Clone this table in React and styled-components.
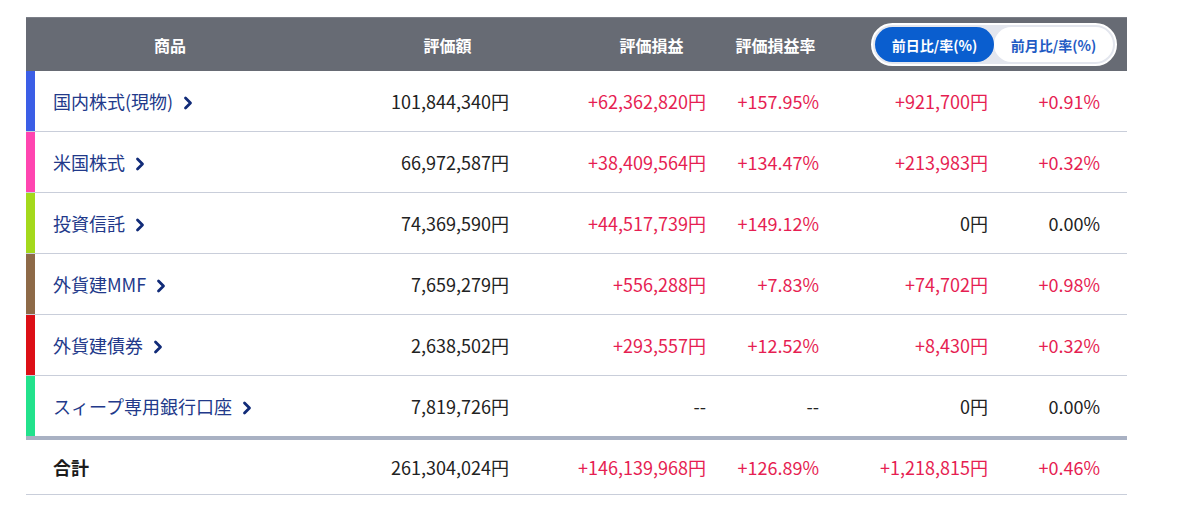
import styled, { createGlobalStyle } from "styled-components";

const GlobalStyle = createGlobalStyle`
    body {
        margin: 0;
        background: #ffffff;
        font-family: "Noto Sans CJK JP", "Noto Sans", sans-serif;
    }
`;

const rows = [
    { name: "国内株式(現物)", color: "#3b5ee6", value: "101,844,340円", pl: "+62,362,820円", rate: "+157.95%", day: "+921,700円", dayRate: "+0.91%" },
    { name: "米国株式", color: "#ff45b0", value: "66,972,587円", pl: "+38,409,564円", rate: "+134.47%", day: "+213,983円", dayRate: "+0.32%" },
    { name: "投資信託", color: "#a4d91c", value: "74,369,590円", pl: "+44,517,739円", rate: "+149.12%", day: "0円", dayRate: "0.00%" },
    { name: "外貨建MMF", color: "#8e6a48", value: "7,659,279円", pl: "+556,288円", rate: "+7.83%", day: "+74,702円", dayRate: "+0.98%" },
    { name: "外貨建債券", color: "#dc0f16", value: "2,638,502円", pl: "+293,557円", rate: "+12.52%", day: "+8,430円", dayRate: "+0.32%" },
    { name: "スィープ専用銀行口座", color: "#22e28c", value: "7,819,726円", pl: "--", rate: "--", day: "0円", dayRate: "0.00%" },
];

const total = { value: "261,304,024円", pl: "+146,139,968円", rate: "+126.89%", day: "+1,218,815円", dayRate: "+0.46%" };

// plus sign means gain -> red
const isUp = (v) => v.startsWith("+");

const Page = styled.div`
    padding: 17px 0 0 26px;
`;

const Table = styled.div`
    width: 1101px;
`;

const cols = "304px 195px 197px 113px 169px 123px";

const HeaderRow = styled.div`
    display: grid;
    grid-template-columns: ${cols};
    height: 54px;
    align-items: center;
    background: #676b74;
    border-top: 1px solid #7b7f88;
    box-sizing: border-box;
`;

const HeaderCell = styled.div`
    color: #ffffff;
    font-size: 16px;
    font-weight: 700;
    text-align: center;
    padding-left: ${(p) => p.$shift > 0 ? p.$shift * 2 : 0}px;
    padding-right: ${(p) => p.$shift < 0 ? -p.$shift * 2 : 0}px;
`;

const ToggleCell = styled.div`
    grid-column: 5 / span 2;
    display: flex;
    justify-content: flex-end;
    padding-right: 10px;
`;

const Toggle = styled.div`
    display: flex;
    width: 246px;
    height: 43px;
    box-sizing: border-box;
    padding: 2px;
    border: 2px solid #ffffff;
    border-radius: 22px;
    background: #e3e6ee;
`;

const ToggleButton = styled.button`
    flex: 1;
    border: none;
    border-radius: 18px;
    font-family: inherit;
    font-size: 14px;
    font-weight: 700;
    background: ${(p) => (p.$active ? "#0a5ecf" : "#ffffff")};
    color: ${(p) => (p.$active ? "#ffffff" : "#1f5bc4")};
    padding: 0;
    cursor: pointer;
`;

const Row = styled.div`
    display: grid;
    grid-template-columns: ${cols};
    height: ${(p) => (p.$total ? 54 : 60)}px;
    align-items: center;
    border-bottom: ${(p) => (p.$thick ? "4px solid #a9b1c3" : "1px solid #c9ceda")};
`;

const NameCell = styled.div`
    align-self: stretch;
    display: flex;
    align-items: center;
    gap: 10px;
    border-left: 9px solid ${(p) => p.$color || "transparent"};
    padding-left: 18px;
    font-size: 18px;
    color: ${(p) => (p.$total ? "#1b1b1b" : "#22398a")};
    font-weight: ${(p) => (p.$total ? 700 : 400)};
`;

const Chevron = styled.svg`
    width: 10px;
    height: 14px;
    margin-top: 3px;
`;

const Cell = styled.div`
    text-align: right;
    padding-right: ${(p) => (p.$last ? 27 : 16)}px;
    font-size: 18px;
    color: ${(p) => (p.$up ? "#e61e52" : "#222222")};
    white-space: nowrap;
`;

const Arrow = () => (
    <Chevron viewBox="0 0 10 14">
        <path d="M2.5 2 L7.5 7 L2.5 12" fill="none" stroke="#112b78" strokeWidth="2.8" strokeLinecap="round" strokeLinejoin="round" />
    </Chevron>
);

const Values = ({ item }) => (
    <>
        <Cell $up={isUp(item.value)}>{item.value}</Cell>
        <Cell $up={isUp(item.pl)}>{item.pl}</Cell>
        <Cell $up={isUp(item.rate)}>{item.rate}</Cell>
        <Cell $up={isUp(item.day)}>{item.day}</Cell>
        <Cell $up={isUp(item.dayRate)} $last>{item.dayRate}</Cell>
    </>
);

const App = () => {
    return (
        <>
            <GlobalStyle />
            <Page>
                <Table>
                    <HeaderRow>
                        <HeaderCell $shift={-8}>商品</HeaderCell>
                        <HeaderCell $shift={20}>評価額</HeaderCell>
                        <HeaderCell $shift={28}>評価損益</HeaderCell>
                        <HeaderCell $shift={-3}>評価損益率</HeaderCell>
                        <ToggleCell>
                            <Toggle>
                                <ToggleButton $active>前日比/率(%)</ToggleButton>
                                <ToggleButton>前月比/率(%)</ToggleButton>
                            </Toggle>
                        </ToggleCell>
                    </HeaderRow>
                    {rows.map((r, i) => (
                        <Row key={r.name} $thick={i === rows.length - 1}>
                            <NameCell $color={r.color}>
                                {r.name}
                                <Arrow />
                            </NameCell>
                            <Values item={r} />
                        </Row>
                    ))}
                    <Row $total>
                        <NameCell $total>合計</NameCell>
                        <Values item={total} />
                    </Row>
                </Table>
            </Page>
        </>
    );
};

export default App;
